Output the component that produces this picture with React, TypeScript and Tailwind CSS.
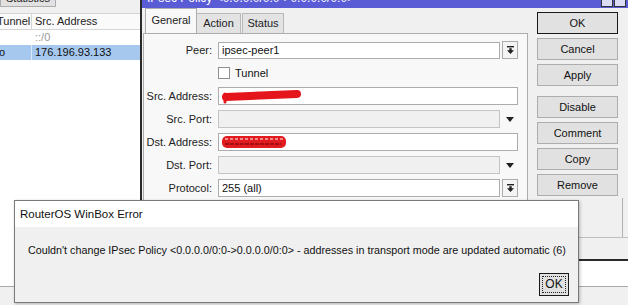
import React from 'react'

function DropBtn() {
  return (
    <div className="flex h-[18px] w-[16px] shrink-0 items-center justify-center border border-[#acacac] bg-[#f4f4f4]">
      <svg width="7" height="8" viewBox="0 0 7 8">
        <rect x="0" y="0" width="7" height="1.4" fill="#222" />
        <path d="M2.3 2.2h2.4v2h2.3L3.5 8 0 4.2h2.3z" fill="#222" />
      </svg>
    </div>
  )
}

function ArrowOnly() {
  return (
    <div className="flex h-[18px] w-[16px] shrink-0 items-center justify-center">
      <svg width="8" height="5" viewBox="0 0 8 5">
        <path d="M0 0h8L4 5z" fill="#222" />
      </svg>
    </div>
  )
}

function Row({ label, children }: { label: string; children: React.ReactNode }) {
  return (
    <div className="flex h-[18px] items-center">
      <div className="w-[69px] shrink-0 pr-[1px] text-right text-[#222]">{label}</div>
      <div className="ml-[5px] flex items-center gap-[2px]">{children}</div>
    </div>
  )
}

function Btn({ label, main }: { label: string; main?: boolean }) {
  return (
    <div
      className={`flex h-[22px] w-[81px] items-center justify-center bg-[#e1e1e1] text-[#111] ${
        main ? 'border border-[#1a1a1a]' : 'border border-[#adadad]'
      }`}
    >
      {label}
    </div>
  )
}

export default function App() {
  return (
    <div className="relative h-[305px] w-[628px] overflow-hidden bg-white font-['Liberation_Sans',Arial,sans-serif] text-[11px] leading-[13px]">
      {/* background list window */}
      <div className="flex h-full flex-col">
        <div className="h-[13px] bg-[#f0f0f0]">
          <div className="mt-[-12px] flex h-[19px] w-[56px] items-end justify-center border border-[#adadad] bg-[#e1e1e1] pb-[1px] text-[#222]">
            Statistics
          </div>
        </div>
        <div className="flex h-[17px] items-center border-y border-[#d5d5d5] bg-[#fafafa] text-[#222]">
          <div className="w-[31px] overflow-hidden whitespace-nowrap">
            <span className="ml-[-3px]">Tunnel</span>
          </div>
          <div className="h-full w-px bg-[#d5d5d5]" />
          <div className="pl-[3px]">Src. Address</div>
        </div>
        <div className="flex h-[15px] items-center">
          <div className="w-[32px]" />
          <div className="pl-[3px] text-[#9a9a9a]">::/0</div>
        </div>
        <div className="flex h-[15px] items-center bg-[#a6c8ef] text-[#111]">
          <div className="w-[31px] overflow-hidden whitespace-nowrap">
            <span className="ml-[-7px]">no</span>
          </div>
          <div className="h-full w-px bg-[#dbe8f7]" />
          <div className="pl-[3px]">176.196.93.133</div>
        </div>
        <div className="flex-1 bg-white" />
        <div className="h-[19px] border-t border-[#a9a9a9] bg-[#f0f0f0]" />
      </div>

      {/* IPsec policy window */}
      <div className="absolute left-[140px] top-0 flex h-[261px] w-[490px] flex-col border-l-2 border-b-2 border-[#2a2a2a] bg-[#f0f0f0]">
        <div className="relative h-[8px] shrink-0 overflow-hidden bg-[#5a5cd6]">
          <div className="mt-[-8px] whitespace-nowrap pl-[5px] text-[12px] leading-[12px] text-white">
            IPsec Policy &lt;0.0.0.0/0:0-&gt;0.0.0.0/0:0&gt;
          </div>
          <div className="absolute right-[4px] top-[-4px] flex gap-[1px]">
            <div className="h-[11px] w-[12px] border border-[#333] bg-[#dcdcf4]" />
            <div className="h-[11px] w-[12px] border border-[#333] bg-[#dcdcf4]" />
          </div>
        </div>

        <div className="flex flex-1">
          <div className="ml-[1px] flex w-[385px] flex-col">
            <div className="flex h-[25px] items-end pl-[2px]">
              <div className="flex h-[25px] w-[52px] items-center justify-center border border-b-0 border-[#adadad] bg-[#f8f8f8] pb-[2px] text-[#222]">
                General
              </div>
              <div className="flex h-[20px] w-[44px] items-center justify-center border border-b-0 border-l-0 border-[#b8b8b8] bg-[#e3e3e3] text-[#222]">
                Action
              </div>
              <div className="ml-px flex h-[20px] w-[42px] items-center justify-center border border-b-0 border-[#b8b8b8] bg-[#e3e3e3] text-[#222]">
                Status
              </div>
            </div>
            <div className="flex h-[198px] flex-col gap-[5px] border border-[#adadad] bg-[#f8f8f8] pt-[7px]">
              <Row label="Peer:">
                <div className="flex h-[17px] w-[282px] items-center border border-[#acacac] bg-white pl-[3px] text-[#111]">
                  ipsec-peer1
                </div>
                <DropBtn />
              </Row>
              <Row label="">
                <div className="flex items-center gap-[5px]">
                  <div className="h-[12px] w-[12px] border border-[#8f8f8f] bg-white" />
                  <span className="text-[#111]">Tunnel</span>
                </div>
              </Row>
              <Row label="Src. Address:">
                <div className="flex h-[18px] w-[300px] items-center border border-[#acacac] bg-white pl-[2px]">
                  <svg width="80" height="15" viewBox="0 0 80 15">
                    <path d="M4 5v8" stroke="#e4161b" strokeWidth="3" strokeLinecap="round" />
                    <path d="M5 8 C 25 7, 50 6, 76 5" stroke="#e4161b" strokeWidth="8" strokeLinecap="round" fill="none" />
                  </svg>
                </div>
              </Row>
              <Row label="Src. Port:">
                <div className="h-[18px] w-[282px] border border-[#c4c4c4] bg-[#f0f0f0]" />
                <ArrowOnly />
              </Row>
              <Row label="Dst. Address:">
                <div className="flex h-[18px] w-[300px] items-center border border-[#acacac] bg-white pl-[2px]">
                  <svg width="66" height="14" viewBox="0 0 66 14">
                    <rect x="1" y="1" width="64" height="12" rx="5" fill="#e21b1f" />
                    <path d="M4 4h58" stroke="#fff" strokeWidth="1" strokeDasharray="3 2" />
                    <path d="M4 9h56" stroke="#8d0d10" strokeWidth="1.5" strokeDasharray="4 1" />
                  </svg>
                </div>
              </Row>
              <Row label="Dst. Port:">
                <div className="h-[18px] w-[282px] border border-[#c4c4c4] bg-[#f0f0f0]" />
                <ArrowOnly />
              </Row>
              <Row label="Protocol:">
                <div className="flex h-[18px] w-[282px] items-center border border-[#acacac] bg-white pl-[3px] text-[#111]">
                  255 (all)
                </div>
                <DropBtn />
              </Row>
            </div>
          </div>

          <div className="ml-[9px] flex flex-col pt-[4px]">
            <div className="flex flex-col gap-[4px]">
              <Btn label="OK" main />
              <Btn label="Cancel" />
              <Btn label="Apply" />
            </div>
            <div className="mt-[10px] flex flex-col gap-[4px]">
              <Btn label="Disable" />
              <Btn label="Comment" />
              <Btn label="Copy" />
              <Btn label="Remove" />
            </div>
          </div>
          <div className="ml-[4px] mt-[190px] w-px bg-[#b0b0b0]" />
        </div>

        <div className="h-[22px] shrink-0 border-t border-[#c0c0c0] bg-[#f0f0f0]" />
      </div>

      {/* error dialog */}
      <div className="absolute left-[14px] top-[200px] flex h-[103px] w-[565px] flex-col border border-[#7a7a7a] bg-[#f0f0f0] shadow-[1px_1px_3px_rgba(0,0,0,0.25)]">
        <div className="flex h-[26px] shrink-0 items-center bg-white pl-[5px] text-[11.5px] text-[#111]">
          RouterOS WinBox Error
        </div>
        <div className="whitespace-nowrap pl-[13px] pt-[17px] text-[10.75px] text-[#111]">
          Couldn't change IPsec Policy &lt;0.0.0.0/0:0-&gt;0.0.0.0/0:0&gt; - addresses in transport mode are updated automatic (6)
        </div>
        <div className="mt-auto flex justify-end pb-[6px] pr-[9px]">
          <div className="flex h-[23px] w-[30px] items-center justify-center border border-[#1a1a1a] bg-[#e1e1e1] p-[2px]">
            <div className="flex h-full w-full items-center justify-center border border-dotted border-[#222] text-[12px] text-[#111]">
              OK
            </div>
          </div>
        </div>
      </div>
    </div>
  )
}
